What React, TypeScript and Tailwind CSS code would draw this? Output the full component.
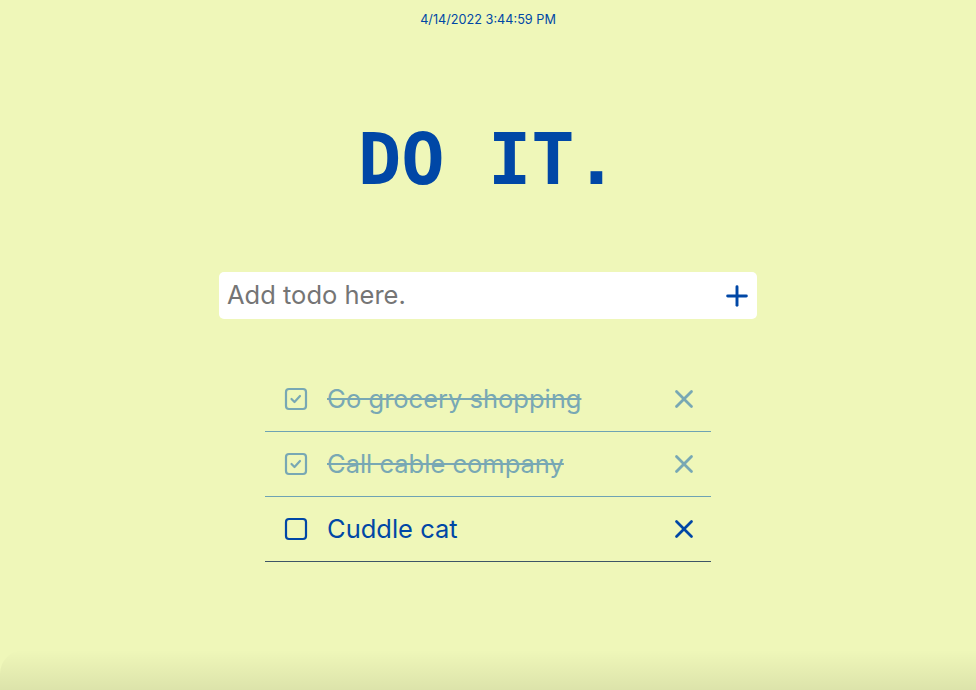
import { X, Plus } from "lucide-react";

type Todo = { id: number; text: string; done: boolean };

const todos: Todo[] = [
  { id: 1, text: "Go grocery shopping", done: true },
  { id: 2, text: "Call cable company", done: true },
  { id: 3, text: "Cuddle cat", done: false },
];

function CheckBox({ checked }: { checked: boolean }) {
  return (
    <svg
      width="24"
      height="24"
      viewBox="0 0 24 24"
      fill="none"
      stroke="currentColor"
      strokeWidth="2.2"
      strokeLinecap="round"
      strokeLinejoin="round"
      className="shrink-0"
    >
      <rect x="2" y="2" width="20" height="20" rx="3" />
      {checked && <path d="m7.5 12 3 3 5.5-6" />}
    </svg>
  );
}

export default function App() {
  return (
    <div className="flex h-[690px] flex-col items-center overflow-hidden bg-[#eff7b9] font-['Inter','Liberation_Sans',sans-serif] text-[#0047a6]">
      <div className="pt-3 text-[12.7px] leading-4">4/14/2022 3:44:59 PM</div>

      <h1 className="mt-[95px] font-['DejaVu_Sans_Mono',monospace] text-[72px] leading-[72px] font-bold">
        DO IT.
      </h1>

      <div className="mt-[77px] flex h-[47px] w-[538px] items-center rounded-[5px] bg-white pr-1 pl-2">
        <input
          className="min-w-0 flex-1 bg-transparent text-[25.5px] text-[#333] outline-none placeholder:text-[#757575]"
          placeholder="Add todo here."
        />
        <Plus size={32} strokeWidth={2.2} className="text-[#0047a6]" />
      </div>

      <ul className="mt-[48px] w-[446px]">
        {todos.map((todo) => (
          <li
            key={todo.id}
            className={`flex h-[65px] items-center border-b pr-[12px] pl-[19px] ${
              todo.done
                ? "border-[#6fa3b3] text-[#78a8b4]"
                : "border-[#3e5566] text-[#0047a6]"
            }`}
          >
            <CheckBox checked={todo.done} />
            <span
              className={`ml-[19px] flex-1 text-[25.5px] ${
                todo.done ? "line-through" : ""
              }`}
            >
              {todo.text}
            </span>
            <X size={30} strokeWidth={2.2} />
          </li>
        ))}
      </ul>

      <div className="mt-auto h-10 w-full rounded-tl-[24px] bg-gradient-to-b from-transparent to-black/[0.08]" />
    </div>
  );
}
